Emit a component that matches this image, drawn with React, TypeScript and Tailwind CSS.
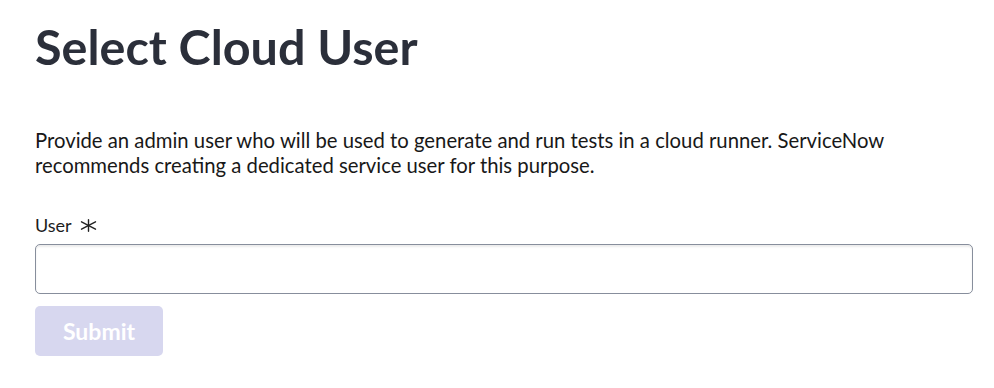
import React from "react";

const RequiredMark = () => (
  <svg width="17" height="13" viewBox="0 0 17 13" className="text-[#222222]" aria-hidden="true">
    <g stroke="currentColor" strokeWidth="1.4" strokeLinecap="round">
      <line x1="8.5" y1="0.7" x2="8.5" y2="12.3" />
      <line x1="1.5" y1="2.8" x2="15.5" y2="10.2" />
      <line x1="1.5" y1="10.2" x2="15.5" y2="2.8" />
    </g>
  </svg>
);

export default function App() {
  return (
    <div
      className="min-h-screen w-full bg-white px-[35px] pt-[18px] text-[#1d1d1d]"
      style={{ fontFamily: "Lato, 'Noto Sans', sans-serif" }}
    >
      <h1 className="text-[48.5px] font-bold leading-[56px] text-[#2b2f3a]">Select Cloud User</h1>

      <p className="mt-[54px] text-[20.3px] leading-[25px] text-[#181818]">
        Provide an admin user who will be used to generate and run tests in a cloud runner. ServiceNow
        <br />
        recommends creating a dedicated service user for this purpose.
      </p>

      <form className="mt-[35px] flex flex-col" onSubmit={(e) => e.preventDefault()}>
        <label className="flex items-center gap-[8px] text-[18px] leading-[24px] text-[#1d1d1d]">
          User
          <RequiredMark />
        </label>
        <input
          type="text"
          className="mt-[7px] h-[50px] w-[938px] rounded-[5px] border border-[#878e9c] bg-white px-3 text-[18px] shadow-[inset_0_2px_2px_rgba(0,0,0,0.08)] outline-none"
        />
        <button
          type="submit"
          disabled
          className="mt-[12px] h-[50px] w-[128px] rounded-[5px] bg-[#d7d7ef] text-[23px] font-bold text-white"
        >
          Submit
        </button>
      </form>
    </div>
  );
}
